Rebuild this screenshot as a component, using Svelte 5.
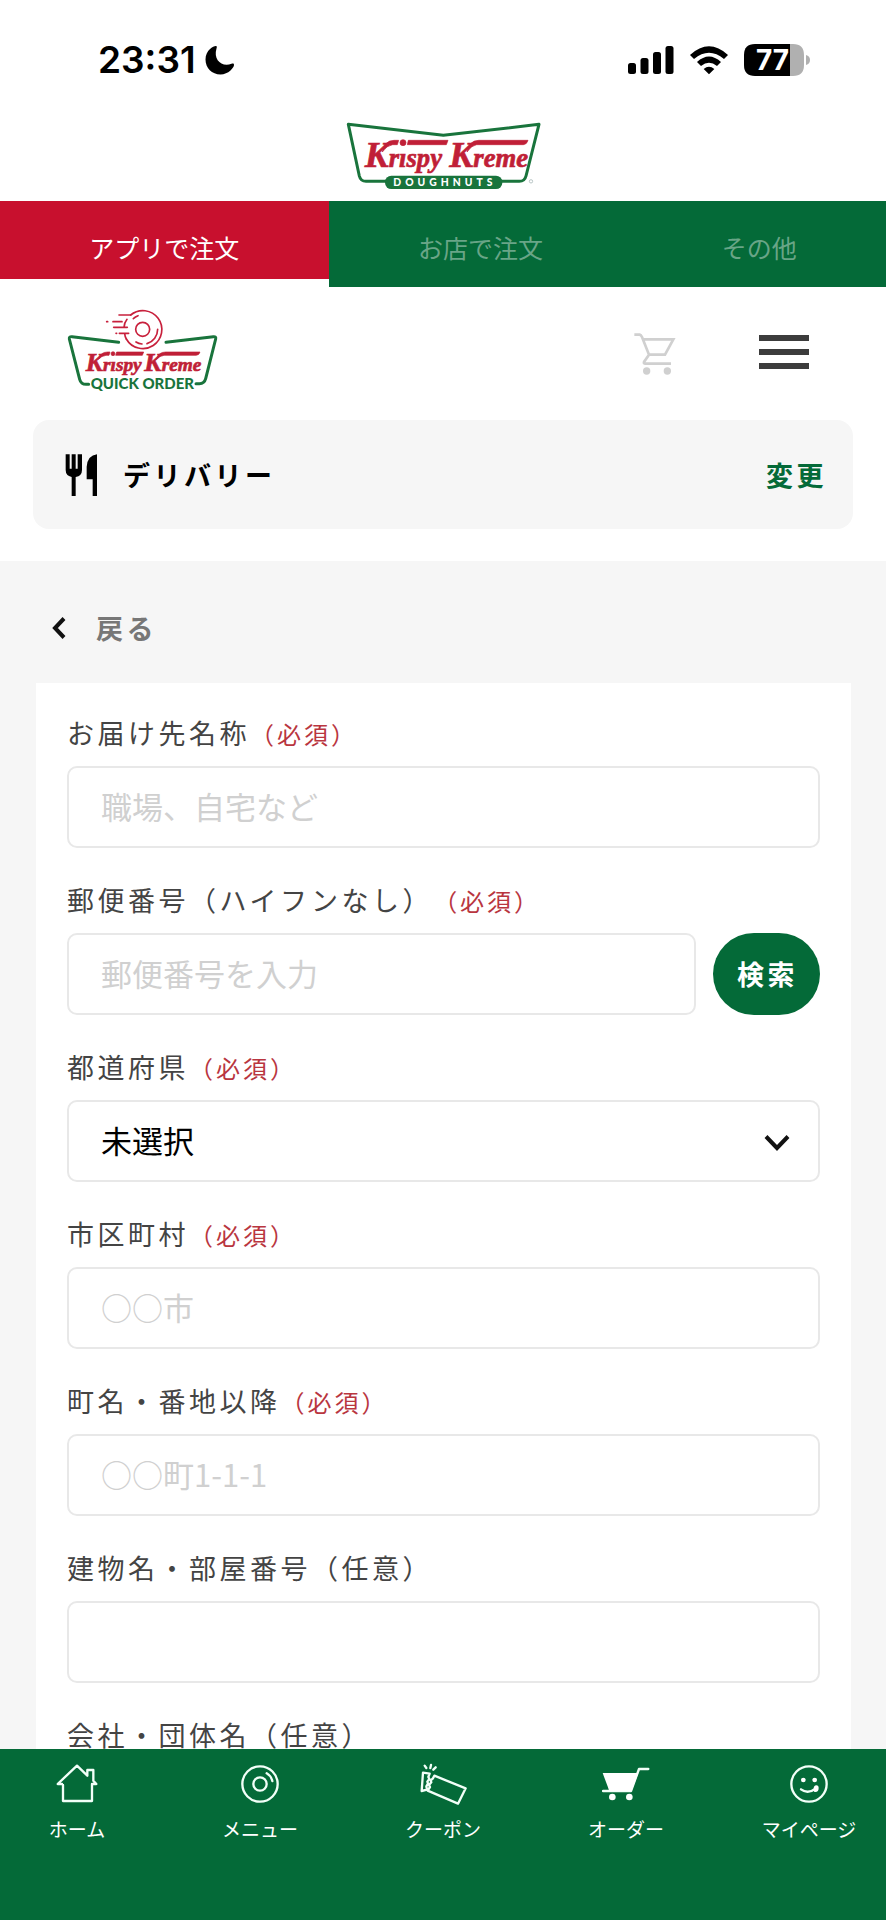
<script>
  const fields = [
    { id: 'name', label: 'お届け先名称', required: true, placeholder: '職場、自宅など' },
    { id: 'zip', label: '郵便番号（ハイフンなし）', required: true, placeholder: '郵便番号を入力', search: true },
    { id: 'pref', label: '都道府県', required: true, select: true },
    { id: 'city', label: '市区町村', required: true, placeholder: '○○市' },
    { id: 'street', label: '町名・番地以降', required: true, placeholder: '○○町1-1-1' },
    { id: 'building', label: '建物名・部屋番号（任意）', placeholder: '' },
    { id: 'company', label: '会社・団体名（任意）', placeholder: '' }
  ];
</script>

<div class="app">
  <div class="status">
    <div class="clock">
      <span>23:31</span>
      <svg width="30" height="30" viewBox="0 0 30 30"><path d="M11 1C9.500 0.500 0.500 4.500 0.500 14.500C0.500 23 7 29.500 15.500 29.500C23.500 29.500 29 22.500 29 20C29 18.500 28 18.200 26.500 18.800C17 22.500 8 15 11.500 3.500C12 2 12 1.300 11 1Z" /></svg>
    </div>
    <div class="signals">
      <svg width="46" height="30" viewBox="0 0 46 30"><rect x="0" y="18" width="8" height="11" rx="2.500" /><rect x="12.500" y="13" width="8" height="16" rx="2.500" /><rect x="25" y="7" width="8" height="22" rx="2.500" /><rect x="37.500" y="1" width="8" height="28" rx="2.500" /></svg>
      <svg width="40" height="30" viewBox="0 0 120 90"><path d="M3 30Q60 -22 117 30L105 42Q60 4 15 42ZM24 51Q60 18 96 51L84 63Q60 43 36 63ZM44 72Q60 58 76 72L60 88Z" /></svg>
      <svg width="66" height="32" viewBox="0 0 66 32">
        <path class="cell" d="M46 0H49Q60 0 60 11V21Q60 32 49 32H46ZM62 11Q66 12 66 16Q66 20 62 21Z" />
        <path d="M11 0H46V32H11Q0 32 0 21V11Q0 0 11 0Z" />
        <text class="charge" x="12" y="26">77</text>
      </svg>
    </div>
  </div>

  <div class="brand">
    <svg width="230" height="90" viewBox="0 0 690 270" role="img" aria-label="Krispy Kreme Doughnuts">
      <path class="frame" d="M170 214H108Q92 214 88 198L55 43L340 76L627 43L588 198Q584 214 568 214H510" />
      <rect class="badge" x="165" y="197" width="352" height="40" rx="19" />
      <text class="dough" x="190" y="228">DOUGHNUTS</text>
      <g class="script">
        <path d="M157 126Q162 92 192 91H206L202 104H188Q170 106 157 126ZM235 91H354L349 104H232ZM411 126Q416 92 446 91H594Q590 104 580 104H440Q424 106 411 126Z" />
        <circle cx="219" cy="98" r="9" />
        <text x="104" y="172"><tspan class="cap">K</tspan>rıspy</text>
        <text x="358" y="172"><tspan class="cap">K</tspan>reme</text>
      </g>
      <circle class="reg" cx="603" cy="214" r="5" />
    </svg>
  </div>

  <nav class="tabs">
    <a class="on" href="#app">アプリで注文</a>
    <a href="#store">お店で注文</a>
    <a href="#other">その他</a>
  </nav>

  <main>
    <header>
      <svg width="190" height="100" viewBox="0 0 570 300" role="img" aria-label="Krispy Kreme Quick Order">
        <path class="frame" d="M116 253H108Q93 253 89 238L58 117Q57 109 66 110L206 127M348 127L490 110Q499 109 497 117L467 236Q463 251 448 251H438" />
        <g class="donut">
          <circle cx="278" cy="88" r="21" />
          <path d="M242 45A57 57 0 1 1 229 117" />
          <path d="M323 88A45 45 0 0 1 291 131M276 132Q266 131 258 126M250 56Q256 50 264 47M231 58Q223 68 222 82M207 45H242M189 65H216M170 65H173M191 82H232M208 100H236M198 100H200M229 117Q225 111 224 101" />
        </g>
        <g class="script small">
          <path d="M145 178Q151 156 173 156H180L177 166H168Q154 168 145 178ZM200 156H281L277 166H197ZM319 178Q325 156 347 156H450Q447 166 438 166H342Q328 168 319 178Z" />
          <circle cx="189" cy="161" r="6" />
          <text x="107" y="213"><tspan class="cap">K</tspan>rıspy</text>
          <text x="283" y="213"><tspan class="cap">K</tspan>reme</text>
        </g>
        <text class="quick" x="122" y="266">QUICK ORDER</text>
      </svg>
      <div class="actions">
        <button class="plain" aria-label="カート">
          <svg width="42" height="42" viewBox="0 0 126 126" fill="none" stroke="#d0d0d0" stroke-width="8"><path d="M1 5H17Q21 6 24 12L45 65H93L118 19H27M45 65L30 87Q28 92 34 92H111" /><g fill="#d0d0d0" stroke="none"><circle cx="38" cy="114" r="11" /><circle cx="100" cy="114" r="11" /></g></svg>
        </button>
        <button class="plain burger" aria-label="メニューを開く"><i></i><i></i><i></i></button>
      </div>
    </header>

    <section class="method">
      <svg width="32" height="42" viewBox="0 0 96 126"><path d="M2 1H14V44H20V1H32V44H38V1H51V48Q51 66 32 69V126H20V69Q2 65 2 48ZM96 1V126H83V76H65V38Q68 4 96 1Z" /></svg>
      <strong>デリバリー</strong>
      <a href="#change">変更</a>
    </section>

    <div class="sheet">
      <a class="back" href="#back">
        <svg width="14" height="22" viewBox="0 0 14 22"><path d="M12 1.500L3 11L12 20.500" fill="none" stroke="#111" stroke-width="4" /></svg>
        戻る
      </a>
      <form class="card">
        {#each fields as f (f.id)}
          <div class="field">
            <label for={f.id}>{f.label}{#if f.required}<em>（必須）</em>{/if}</label>
            <div class="row">
              {#if f.select}
                <div class="pick">
                  <select id={f.id}><option>未選択</option></select>
                  <svg width="26" height="18" viewBox="0 0 26 18"><path d="M2 2.500L13 14L24 2.500" fill="none" stroke="#111" stroke-width="4" /></svg>
                </div>
              {:else}
                <input id={f.id} type="text" placeholder={f.placeholder} />
              {/if}
              {#if f.search}<button type="button" class="search">検索</button>{/if}
            </div>
          </div>
        {/each}
      </form>
    </div>
  </main>

  <nav class="dock">
    <a href="#home">
      <svg viewBox="0 0 144 126"><path d="M27 63H14L72 8L103 38V21H121V53L130 63H117V114H30V66" /></svg>
      ホーム
    </a>
    <a href="#menu">
      <svg viewBox="0 0 144 126"><circle cx="72" cy="63" r="53" /><circle cx="72" cy="63" r="20" /><path d="M92 31Q105 38 109 54" /></svg>
      メニュー
    </a>
    <a href="#coupon">
      <svg viewBox="0 0 144 126"><path d="M12 29L32 32L28 42L31 48L25 56L27 62L22 70L24 80L8 84ZM46 38L140 76L117 122L26 83L33 72L30 66L37 58L35 52L42 46ZM17 8L22 15M36 6L34 15M50 13L43 20" /></svg>
      クーポン
    </a>
    <a href="#order">
      <svg viewBox="0 0 144 126"><path d="M3 84H87L111 18H139" /><path class="solid" d="M2 30H109L89 84H22Z" /><circle class="solid" cx="31" cy="102" r="10" /><circle class="solid" cx="82" cy="102" r="10" /></svg>
      オーダー
    </a>
    <a href="#mypage">
      <svg viewBox="0 0 144 126"><circle cx="72" cy="63" r="53" /><circle class="solid" cx="55" cy="51" r="7" /><circle class="solid" cx="89" cy="51" r="7" /><path d="M48 79Q68 94 90 78" /><path class="solid" d="M86 77Q86 68 94 67Q101 67 101 75Q101 87 91 87Q85 87 86 77Z" /></svg>
      マイページ
    </a>
  </nav>
</div>

<style>
  :global(body) { margin: 0; background: #fff; }
  .app {
    --green: #046a38;
    --red: #c8102e;
    height: 100vh;
    display: flex;
    flex-direction: column;
    overflow: hidden;
    font-family: "Noto Sans CJK JP", sans-serif;
    text-spacing-trim: space-all;
    color: #000;
  }
  a { color: inherit; text-decoration: none; }
  svg { display: block; flex: none; }

  .status {
    flex: none;
    display: flex;
    justify-content: space-between;
    align-items: center;
    height: 110px;
    padding: 10px 76px 0 98px;
    box-sizing: border-box;
  }
  .clock { display: flex; align-items: center; gap: 9px; font: 600 37px/44px Inter, sans-serif; }
  .signals { display: flex; align-items: center; gap: 15px; }
  .cell { fill: #b0b0b0; }
  .charge { fill: #fff; font: 700 28px Inter, sans-serif; }

  .brand { flex: none; display: flex; justify-content: center; height: 91px; padding-left: 4px; }
  .frame { fill: none; stroke: #19743c; stroke-width: 9; stroke-linejoin: round; stroke-linecap: round; }
  .badge { fill: #19743c; }
  .dough { fill: #fff; font: 900 31px Lato, sans-serif; letter-spacing: 12px; }
  .reg { fill: none; stroke: #9aa; stroke-width: 2; }
  .script { fill: #c01f37; stroke: #c01f37; stroke-width: 2; }
  .script text { font: italic 700 80px "Liberation Serif", serif; }
  .script .cap { font-size: 108px; }
  .script.small text { font-size: 58px; }
  .script.small .cap { font-size: 78px; }
  .donut { fill: none; stroke: #c8203c; stroke-width: 5; stroke-linecap: round; }
  .quick { fill: #19743c; font: 900 45px Lato, sans-serif; }

  .tabs {
    flex: none;
    display: flex;
    align-items: flex-start;
    font-size: 25px;
  }
  .tabs a {
    flex: 1 1 auto;
    height: 86px;
    line-height: 36px;
    padding-top: 28px;
    box-sizing: border-box;
    text-align: center;
    background: var(--green);
    color: #69a587;
  }
  .tabs .on { height: 78px; background: var(--red); color: #fff; }

  main { flex: 1; min-height: 0; overflow-y: auto; scrollbar-width: none; }
  header { display: flex; justify-content: space-between; align-items: center; height: 133px; padding: 0 77px 0 50px; }
  header > svg { margin-top: -8px; }
  .actions { display: flex; align-items: center; gap: 83px; }
  .plain { border: 0; padding: 0; background: none; }
  .burger { display: grid; gap: 8px; width: 50px; margin-bottom: 4px; }
  .burger i { height: 6px; background: #3c3c3c; }

  .method {
    display: flex;
    align-items: center;
    gap: 26px;
    height: 109px;
    margin: 0 33px 32px;
    padding: 0 26px 0 32px;
    border-radius: 16px;
    background: #f6f6f6;
    font-size: 27px;
    letter-spacing: 0.13em;
  }
  .method strong { flex: 1; font-weight: 700; }
  .method a { color: var(--green); font-weight: 700; }

  .sheet { background: #f6f6f6; padding: 0 35px 40px 36px; }
  .back {
    display: flex;
    align-items: center;
    gap: 30px;
    height: 122px;
    padding: 12px 0 0 16px;
    box-sizing: border-box;
    font-size: 27px;
    font-weight: 700;
    letter-spacing: 0.13em;
    line-height: 40px;
    color: #777;
  }
  .card { display: grid; gap: 32px; padding: 30px 31px; background: #fff; }
  label { display: block; height: 40px; margin-bottom: 13px; font-size: 27px; line-height: 40px; letter-spacing: 0.13em; color: #444; white-space: nowrap; }
  label em { font-style: normal; font-size: 24px; line-height: 24px; letter-spacing: 3px; color: #b9363f; }
  .row { display: flex; gap: 17px; }
  input, select {
    flex: 1;
    min-width: 0;
    width: 100%;
    height: 82px;
    padding: 0 32px 4px;
    box-sizing: border-box;
    border: 2px solid #e8e8e8;
    border-radius: 10px;
    background: #fff;
    color: #000;
    font: 31px "Noto Sans CJK JP", sans-serif;
    appearance: none;
  }
  input::placeholder { color: #d0d0d0; opacity: 1; }
  .pick { flex: 1; display: grid; align-items: center; }
  .pick > * { grid-area: 1 / 1; }
  .pick svg { justify-self: end; margin-right: 30px; margin-top: 3px; pointer-events: none; }
  .search {
    width: 107px;
    height: 82px;
    padding: 0 0 2px 2px;
    border: 0;
    border-radius: 41px;
    background: var(--green);
    color: #fff;
    font: 700 27px "Noto Sans CJK JP", sans-serif;
    letter-spacing: 0.13em;
  }

  .dock {
    flex: none;
    display: flex;
    justify-content: space-between;
    padding: 14px 29px 77px;
    background: var(--green);
    color: #fff;
  }
  .dock a { display: flex; flex-direction: column; align-items: center; gap: 10px; width: 96px; font-size: 19px; line-height: 28px; white-space: nowrap; }
  .dock svg { width: 48px; height: 42px; fill: none; stroke: #f2fff8; stroke-width: 7; stroke-linejoin: round; stroke-linecap: round; }
  .dock .solid { fill: #fff; stroke: none; }
</style>
